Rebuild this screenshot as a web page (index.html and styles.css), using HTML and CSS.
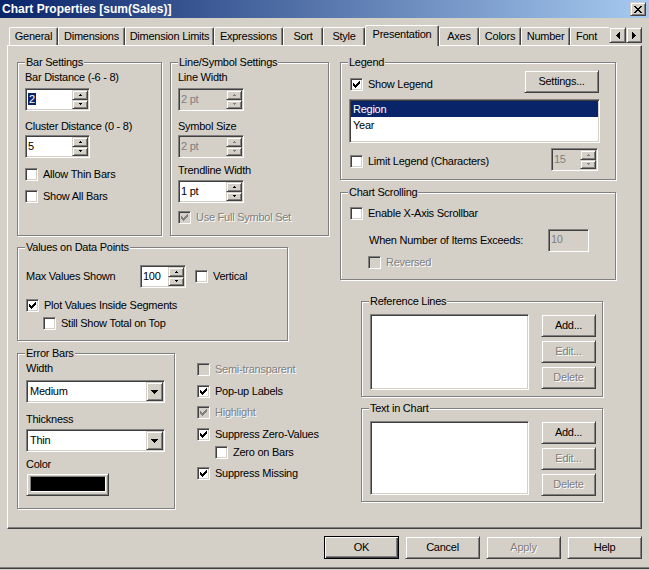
FILE: index.html
```html
<!DOCTYPE html>
<html lang="en">
<head>
<meta charset="utf-8">
<title>Chart Properties</title>
<link rel="stylesheet" href="styles.css">
</head>
<body>
<svg class="icon-defs" aria-hidden="true">
  <defs>
    <symbol id="i-check" viewBox="0 0 7 7"><path d="M0 2h1v3H0zM1 3h1v3H1zM2 4h1v3H2zM3 3h1v3H3zM4 2h1v3H4zM5 1h1v3H5zM6 0h1v3H6z"/></symbol>
    <symbol id="i-up" viewBox="0 0 3 2"><path d="M1 0h1v1H1zM0 1h3v1H0z"/></symbol>
    <symbol id="i-down" viewBox="0 0 3 2"><path d="M0 0h3v1H0zM1 1h1v1H1z"/></symbol>
    <symbol id="i-drop" viewBox="0 0 7 4"><path d="M0 0h7v1H0zM1 1h5v1H1zM2 2h3v1H2zM3 3h1v1H3z"/></symbol>
    <symbol id="i-left" viewBox="0 0 4 7"><path d="M3 0h1v7H3zM2 1h1v5H2zM1 2h1v3H1zM0 3h1v1H0z"/></symbol>
    <symbol id="i-right" viewBox="0 0 4 7"><path d="M0 0h1v7H0zM1 1h1v5H1zM2 2h1v3H2zM3 3h1v1H3z"/></symbol>
    <symbol id="i-close" viewBox="0 0 8 7"><path d="M0 0h2v1H0zM6 0h2v1H6zM1 1h2v1H1zM5 1h2v1H5zM2 2h4v1H2zM3 3h2v1H3zM2 4h4v1H2zM1 5h2v1H1zM5 5h2v1H5zM0 6h2v1H0zM6 6h2v1H6z"/></symbol>
  </defs>
</svg>

<div class="window">
  <header class="titlebar">
    <span class="title">Chart Properties [sum(Sales)]</span>
    <span class="raised close"><svg class="ic ic-close"><use href="#i-close"/></svg></span>
  </header>

  <nav class="tabs">
    <span class="tab t-general">General</span>
    <span class="tab t-dims">Dimensions</span>
    <span class="tab t-limits">Dimension Limits</span>
    <span class="tab t-expr">Expressions</span>
    <span class="tab t-sort">Sort</span>
    <span class="tab t-style">Style</span>
    <span class="tab t-pres active">Presentation</span>
    <span class="tab t-axes">Axes</span>
    <span class="tab t-colors">Colors</span>
    <span class="tab t-number">Number</span>
    <span class="tab t-font">Font</span>
    <span class="tab-scroll">
      <span class="raised sbtn sbtn-l"><svg class="ic ic-arrow"><use href="#i-left"/></svg></span>
      <span class="raised sbtn sbtn-r"><svg class="ic ic-arrow"><use href="#i-right"/></svg></span>
    </span>
  </nav>

  <main class="panel">
    <div class="col-left">
      <div class="row-top">
        <section class="group g-bar">
          <div class="gtitle">Bar Settings</div>
          <div class="gbody">
            <div class="lbl mt2">Bar Distance (-6 - 8)</div>
            <div class="sunken spin w65 mt4">
              <span class="val"><span class="hl">2</span></span>
              <span class="spin-btns">
                <span class="raised sb"><svg class="ic ic-tiny"><use href="#i-up"/></svg></span>
                <span class="raised sb"><svg class="ic ic-tiny"><use href="#i-down"/></svg></span>
              </span>
            </div>
            <div class="lbl mt9">Cluster Distance (0 - 8)</div>
            <div class="sunken spin w65 mt2">
              <span class="val">5</span>
              <span class="spin-btns">
                <span class="raised sb"><svg class="ic ic-tiny"><use href="#i-up"/></svg></span>
                <span class="raised sb"><svg class="ic ic-tiny"><use href="#i-down"/></svg></span>
              </span>
            </div>
            <label class="cb mt10"><span class="box"></span>Allow Thin Bars</label>
            <label class="cb mt9"><span class="box"></span>Show All Bars</label>
          </div>
        </section>

        <section class="group g-line">
          <div class="gtitle">Line/Symbol Settings</div>
          <div class="gbody">
            <div class="lbl mt2">Line Width</div>
            <div class="sunken spin off w66 mt4">
              <span class="val">2 pt</span>
              <span class="spin-btns">
                <span class="raised sb"><svg class="ic ic-tiny"><use href="#i-up"/></svg></span>
                <span class="raised sb"><svg class="ic ic-tiny"><use href="#i-down"/></svg></span>
              </span>
            </div>
            <div class="lbl mt9">Symbol Size</div>
            <div class="sunken spin off w66 mt2">
              <span class="val">2 pt</span>
              <span class="spin-btns">
                <span class="raised sb"><svg class="ic ic-tiny"><use href="#i-up"/></svg></span>
                <span class="raised sb"><svg class="ic ic-tiny"><use href="#i-down"/></svg></span>
              </span>
            </div>
            <div class="lbl mt6">Trendline Width</div>
            <div class="sunken spin w66 mt3">
              <span class="val">1 pt</span>
              <span class="spin-btns">
                <span class="raised sb"><svg class="ic ic-tiny"><use href="#i-up"/></svg></span>
                <span class="raised sb"><svg class="ic ic-tiny"><use href="#i-down"/></svg></span>
              </span>
            </div>
            <label class="cb dis mt8"><span class="box"><svg class="ic ic-check"><use href="#i-check"/></svg></span>Use Full Symbol Set</label>
          </div>
        </section>
      </div>

      <section class="group g-values">
        <div class="gtitle">Values on Data Points</div>
        <div class="gbody">
          <div class="vrow">
            <span class="lbl vlabel">Max Values Shown</span>
            <div class="sunken spin w46">
              <span class="val">100</span>
              <span class="spin-btns">
                <span class="raised sb"><svg class="ic ic-tiny"><use href="#i-up"/></svg></span>
                <span class="raised sb"><svg class="ic ic-tiny"><use href="#i-down"/></svg></span>
              </span>
            </div>
            <label class="cb vcheck"><span class="box"></span>Vertical</label>
          </div>
          <label class="cb mt11"><span class="box"><svg class="ic ic-check"><use href="#i-check"/></svg></span>Plot Values Inside Segments</label>
          <label class="cb mt5 indent17"><span class="box"></span>Still Show Total on Top</label>
        </div>
      </section>

      <div class="row-bottom">
        <section class="group g-err">
          <div class="gtitle">Error Bars</div>
          <div class="gbody">
            <div class="lbl mt2">Width</div>
            <div class="sunken combo mt5">
              <span class="val">Medium</span>
              <span class="raised dd"><svg class="ic ic-drop"><use href="#i-drop"/></svg></span>
            </div>
            <div class="lbl mt10">Thickness</div>
            <div class="sunken combo mt3">
              <span class="val">Thin</span>
              <span class="raised dd"><svg class="ic ic-drop"><use href="#i-drop"/></svg></span>
            </div>
            <div class="lbl mt6">Color</div>
            <div class="raised colorbtn mt2"><span class="swatch"></span></div>
          </div>
        </section>

        <div class="flags">
          <label class="cb dis"><span class="box"></span>Semi-transparent</label>
          <label class="cb mt9"><span class="box"><svg class="ic ic-check"><use href="#i-check"/></svg></span>Pop-up Labels</label>
          <label class="cb dis mt8"><span class="box"><svg class="ic ic-check"><use href="#i-check"/></svg></span>Highlight</label>
          <label class="cb mt9"><span class="box"><svg class="ic ic-check"><use href="#i-check"/></svg></span>Suppress Zero-Values</label>
          <label class="cb mt5 indent18"><span class="box"></span>Zero on Bars</label>
          <label class="cb mt8"><span class="box"><svg class="ic ic-check"><use href="#i-check"/></svg></span>Suppress Missing</label>
        </div>
      </div>
    </div>

    <div class="col-right">
      <section class="group g-legend">
        <div class="gtitle">Legend</div>
        <div class="gbody">
          <div class="legend-top">
            <label class="cb mt8"><span class="box"><svg class="ic ic-check"><use href="#i-check"/></svg></span>Show Legend</label>
            <span class="raised btn w75">Settings...</span>
          </div>
          <div class="sunken listbox legend-list">
            <div class="item sel">Region</div>
            <div class="item">Year</div>
          </div>
          <div class="legend-limit">
            <label class="cb mt7"><span class="box"></span>Limit Legend (Characters)</label>
            <div class="sunken spin off w47">
              <span class="val">15</span>
              <span class="spin-btns">
                <span class="raised sb"><svg class="ic ic-tiny"><use href="#i-up"/></svg></span>
                <span class="raised sb"><svg class="ic ic-tiny"><use href="#i-down"/></svg></span>
              </span>
            </div>
          </div>
        </div>
      </section>

      <section class="group g-scroll">
        <div class="gtitle">Chart Scrolling</div>
        <div class="gbody">
          <label class="cb mt8"><span class="box"></span>Enable X-Axis Scrollbar</label>
          <div class="exceed-row">
            <span class="lbl exceed-label">When Number of Items Exceeds:</span>
            <span class="sunken field off">10</span>
          </div>
          <label class="cb dis mt4 indent18"><span class="box"></span>Reversed</label>
        </div>
      </section>

      <section class="group g-ref">
        <div class="gtitle">Reference Lines</div>
        <div class="gbody list-row">
          <div class="sunken listbox ref-list"></div>
          <div class="btn-col">
            <span class="raised btn w55">Add...</span>
            <span class="raised btn w55 dis">Edit...</span>
            <span class="raised btn w55 dis">Delete</span>
          </div>
        </div>
      </section>

      <section class="group g-text">
        <div class="gtitle">Text in Chart</div>
        <div class="gbody list-row">
          <div class="sunken listbox text-list"></div>
          <div class="btn-col">
            <span class="raised btn w55">Add...</span>
            <span class="raised btn w55 dis">Edit...</span>
            <span class="raised btn w55 dis">Delete</span>
          </div>
        </div>
      </section>
    </div>
  </main>

  <footer class="actions">
    <span class="raised btn w75 def">OK</span>
    <span class="raised btn w75">Cancel</span>
    <span class="raised btn w75 dis">Apply</span>
    <span class="raised btn w75">Help</span>
  </footer>
</div>
</body>
</html>
```

FILE: styles.css
```css
* { box-sizing: border-box; }
html, body { margin: 0; padding: 0; }
body {
  width: 649px;
  height: 570px;
  overflow: hidden;
  background: #d4d0c8;
  color: #000;
  font-family: "Liberation Sans", Arial, sans-serif;
  font-size: 11px;
  line-height: 13px;
  letter-spacing: -0.25px;
}
.icon-defs { display: none; }

/* icons */
.ic { display: block; fill: currentColor; shape-rendering: crispEdges; flex: none; }
.ic-check { width: 7px; height: 7px; }
.ic-tiny { width: 3px; height: 2px; }
.ic-drop { width: 7px; height: 4px; }
.ic-arrow { width: 4px; height: 7px; }
.ic-close { width: 8px; height: 7px; }

/* 3D edges */
.raised {
  background: #d4d0c8;
  border: 1px solid;
  border-color: #d4d0c8 #404040 #404040 #d4d0c8;
  box-shadow: inset 1px 1px 0 #fff, inset -1px -1px 0 #808080;
}
.sunken {
  background: #fff;
  border: 1px solid;
  border-color: #808080 #fff #fff #808080;
  box-shadow: inset 1px 1px 0 #404040, inset -1px -1px 0 #d4d0c8;
  padding: 1px;
}

/* window */
.window {
  height: 569px;
  border-bottom: 1px solid #404040;
  box-shadow: inset 0 -1px 0 #808080;
}
.titlebar {
  height: 18px;
  display: flex;
  align-items: center;
  justify-content: space-between;
  padding: 0 3px 0 2px;
  background: linear-gradient(90deg, #0a246a, #a6caf0);
}
.title { color: #fff; font-weight: bold; font-size: 12px; letter-spacing: 0; }
.close {
  width: 16px;
  height: 14px;
  display: flex;
  align-items: center;
  justify-content: center;
}

/* tabs */
.tabs {
  display: flex;
  align-items: flex-end;
  height: 20px;
  margin: 7px 0 0 9px;
}
.tab {
  flex: none;
  height: 18px;
  display: flex;
  justify-content: center;
  padding-top: 2px;
  white-space: nowrap;
  background: #d4d0c8;
  border-top: 1px solid #fff;
  border-left: 1px solid #fff;
  border-right: 1px solid #404040;
  box-shadow: inset -1px 0 0 #808080;
  border-top-left-radius: 2px;
  border-top-right-radius: 2px;
}
.tab.active {
  height: 21px;
  margin-bottom: -1px;
  position: relative;
  z-index: 1;
}
.t-general { width: 49px; }
.t-dims { width: 67px; }
.t-limits { width: 89px; }
.t-expr { width: 69px; }
.t-sort { width: 40px; }
.t-style { width: 42px; }
.t-pres { width: 74px; }
.t-axes { width: 40px; }
.t-colors { width: 42px; }
.t-number { width: 49px; }
.t-font {
  width: 39px;
  justify-content: flex-start;
  padding-left: 5px;
  border-right: none;
  box-shadow: none;
  border-top-right-radius: 0;
}
.tab-scroll {
  display: flex;
  align-self: flex-start;
  margin-top: 2px;
}
.sbtn {
  height: 16px;
  display: flex;
  align-items: center;
  justify-content: center;
}
.sbtn-l { width: 17px; }
.sbtn-r { width: 16px; }

/* panel */
.panel {
  display: flex;
  align-items: flex-start;
  gap: 10px;
  width: 635px;
  height: 484px;
  margin-left: 7px;
  padding: 16px 0 0 9px;
  border: 1px solid;
  border-color: #fff #404040 #404040 #fff;
  box-shadow: inset -1px -1px 0 #808080;
}
.col-left { width: 313px; flex: none; }
.col-right { width: 276px; flex: none; }

/* group boxes */
.group {
  border: 1px solid #808080;
  box-shadow: inset 1px 1px 0 #fff, 1px 1px 0 #fff;
}
.gtitle {
  width: max-content;
  margin: -7px 0 0 7px;
  padding: 0 1px;
  background: #d4d0c8;
  white-space: nowrap;
}
.row-top { display: flex; gap: 8px; }
.g-bar { width: 145px; height: 174px; }
.g-bar .gbody { padding-left: 7px; }
.g-line { width: 159px; height: 174px; }
.g-line .gbody { padding-left: 7px; }
.g-values { width: 271px; height: 94px; margin-top: 11px; }
.g-values .gbody { padding-left: 8px; }
.row-bottom { display: flex; align-items: flex-start; margin-top: 12px; }
.g-err { width: 158px; height: 156px; flex: none; }
.g-err .gbody { padding-left: 8px; }
.flags { margin: 10px 0 0 22px; }

.g-legend { height: 118px; }
.g-legend .gbody { padding: 0 16px 0 9px; }
.g-scroll { height: 88px; margin-top: 12px; }
.g-scroll .gbody { padding-left: 9px; }
.g-ref { width: 242px; height: 96px; margin: 21px 0 0 21px; }
.g-text { width: 242px; height: 94px; margin: 11px 0 0 21px; }
.g-ref .gbody, .g-text .gbody { padding-left: 8px; }

/* spacing helpers */
.mt2 { margin-top: 2px; }
.mt3 { margin-top: 3px; }
.mt4 { margin-top: 4px; }
.mt5 { margin-top: 5px; }
.mt6 { margin-top: 6px; }
.mt7 { margin-top: 7px; }
.mt8 { margin-top: 8px; }
.mt9 { margin-top: 9px; }
.mt10 { margin-top: 10px; }
.mt11 { margin-top: 11px; }
.indent17 { margin-left: 17px; }
.indent18 { margin-left: 18px; }

.lbl { display: block; white-space: nowrap; }

/* checkboxes */
.cb {
  display: flex;
  align-items: center;
  gap: 5px;
  height: 13px;
  white-space: nowrap;
  width: max-content;
}
.box {
  flex: none;
  width: 13px;
  height: 13px;
  padding: 2px;
  background: #fff;
  border: 1px solid;
  border-color: #808080 #fff #fff #808080;
  box-shadow: inset 1px 1px 0 #404040, inset -1px -1px 0 #d4d0c8;
}
.dis { color: #808080; text-shadow: 1px 1px 0 #fff; }
.cb.dis .box { background: #d4d0c8; }

/* spin / edit / combo */
.spin { display: flex; height: 23px; }
.spin .val { flex: 1; padding: 1px 0 0 1px; line-height: 16px; white-space: nowrap; }
.spin.off { background: #d4d0c8; color: #808080; }
.hl { background: #0a246a; color: #fff; padding: 0 1px; }
.spin-btns { display: flex; flex-direction: column; width: 16px; flex: none; }
.sb {
  flex: 1;
  display: flex;
  align-items: center;
  justify-content: center;
}
.spin.off .sb { color: #808080; }
.w46 { width: 46px; }
.w47 { width: 47px; }
.w55 { width: 55px; }
.w65 { width: 65px; }
.w66 { width: 66px; }
.w75 { width: 75px; }

.combo { display: flex; width: 139px; height: 23px; }
.combo .val { flex: 1; padding-left: 2px; line-height: 19px; }
.dd {
  width: 17px;
  flex: none;
  display: flex;
  align-items: center;
  justify-content: center;
}

.field {
  display: block;
  width: 41px;
  height: 23px;
  line-height: 17px;
  padding-left: 2px;
}
.field.off { background: #d4d0c8; color: #808080; }

.colorbtn {
  width: 83px;
  height: 23px;
  padding: 2px 2px 3px 3px;
  display: flex;
}
.swatch {
  flex: 1;
  background: #000;
  border: 1px solid;
  border-color: #808080 #fff #fff #808080;
}

/* buttons */
.btn {
  display: flex;
  align-items: center;
  justify-content: center;
  height: 23px;
  flex: none;
  white-space: nowrap;
}
.btn.def {
  border-color: #000;
  box-shadow: inset 1px 1px 0 #fff, inset -1px -1px 0 #404040, inset -2px -2px 0 #808080;
}

/* legend */
.legend-top {
  display: flex;
  align-items: flex-start;
  justify-content: space-between;
  margin-top: 1px;
}
.listbox { background: #fff; }
.legend-list { height: 44px; margin: 6px -1px 0 -1px; }
.item { height: 16px; line-height: 16px; padding-left: 2px; }
.item.sel { background: #0a246a; color: #fff; }
.legend-limit {
  display: flex;
  align-items: flex-start;
  justify-content: space-between;
  margin-top: 5px;
}
.legend-limit .spin { margin-right: 1px; }

/* values row */
.vrow { display: flex; align-items: center; margin-top: 11px; }
.vlabel { width: 114px; }
.vcheck { margin-left: 9px; }

/* scrolling */
.exceed-row {
  display: flex;
  align-items: center;
  margin-top: 9px;
  padding-left: 19px;
}
.exceed-label { width: 179px; }

/* reference lines / text in chart */
.list-row { display: flex; margin-top: 6px; }
.ref-list { width: 159px; height: 76px; }
.text-list { width: 159px; height: 74px; }
.btn-col { display: flex; flex-direction: column; gap: 3px; margin-left: 12px; }

/* dialog buttons */
.actions {
  display: flex;
  justify-content: flex-end;
  gap: 6px;
  margin-top: 7px;
  padding-right: 7px;
}
```
